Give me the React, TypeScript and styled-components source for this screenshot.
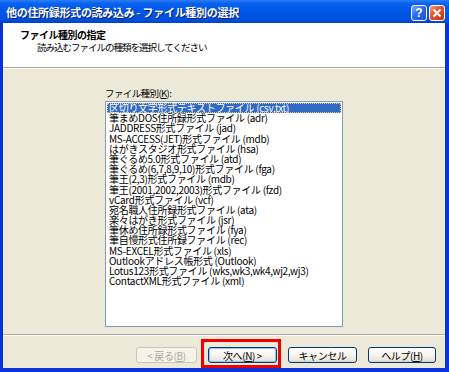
import styled, { createGlobalStyle } from "styled-components";

const GlobalStyle = createGlobalStyle`
  html, body {
    margin: 0;
    padding: 0;
  }
  body {
    width: 449px;
    height: 372px;
    overflow: hidden;
    font-family: "Noto Sans CJK JP", "Noto Sans", sans-serif;
  }
`;

const Window = styled.div`
  width: 449px;
  height: 372px;
  display: flex;
  flex-direction: column;
  background: #0831d9;
`;

const TitleBar = styled.div`
  height: 23px;
  flex: none;
  display: flex;
  align-items: center;
  padding: 0 4px 0 6px;
  background: linear-gradient(#2f7cf7 0%, #0862f0 15%, #0057e8 45%, #0052e0 80%, #0043cc 100%);
`;

const Title = styled.div`
  color: #fff;
  font-size: 11px;
  font-weight: bold;
  letter-spacing: -0.3px;
  text-shadow: 1px 1px #0a1f70;
  white-space: pre;
`;

const Caption = styled.div`
  margin-left: auto;
  margin-top: 2px;
  display: flex;
  gap: 2px;
`;

const CaptionButton = styled.div<{ $close?: boolean }>`
  width: 16px;
  height: 16px;
  box-sizing: border-box;
  border: 1px solid #fff;
  border-radius: 3px;
  display: flex;
  align-items: center;
  justify-content: center;
  color: #fff;
  font: bold 12px "Liberation Sans", sans-serif;
  background: ${(p) =>
    p.$close
      ? "linear-gradient(135deg, #f0a088 0%, #e2572f 40%, #c9330c 100%)"
      : "linear-gradient(135deg, #7fb0fb 0%, #2a6bea 45%, #1a4fd6 100%)"};
`;

const Frame = styled.div`
  flex: 1;
  display: flex;
  flex-direction: column;
  margin: 0 4px 4px 3px;
  background: #ece9d8;
`;

const Header = styled.div`
  height: 44px;
  flex: none;
  box-sizing: border-box;
  background: #fff;
  padding: 5px 0 0 17px;
`;

const HeaderTitle = styled.div`
  font-size: 10px;
  font-weight: bold;
  line-height: 13px;
  letter-spacing: -0.5px;
  color: #000;
`;

const HeaderText = styled.div`
  font-size: 9.5px;
  line-height: 13px;
  letter-spacing: -1px;
  padding-left: 17px;
  color: #000;
`;

const Separator = styled.div`
  flex: none;
  border-top: 1px solid #aca899;
  border-bottom: 1px solid #fff;
`;

const Content = styled.div`
  flex: 1;
  padding: 18px 0 0 102px;
`;

const Label = styled.div`
  font-size: 9.5px;
  line-height: 12px;
  letter-spacing: -0.6px;
  margin-bottom: 2px;
  color: #000;

  u {
    text-decoration: underline;
  }
`;

const ListBox = styled.div`
  width: 238px;
  height: 226px;
  box-sizing: border-box;
  border: 1px solid #7f9db9;
  background: #fff;
  padding: 1px;
  overflow: hidden;
`;

const Row = styled.div<{ $selected?: boolean }>`
  height: 10.2px;
  line-height: 10.2px;
  font-size: 10px;
  letter-spacing: -0.3px;
  white-space: nowrap;
  padding-left: 2px;
  color: ${(p) => (p.$selected ? "#fff" : "#000")};
  background: ${(p) => (p.$selected ? "#316ac5" : "transparent")};
  outline: ${(p) => (p.$selected ? "1px dotted #d8c98a" : "none")};
  outline-offset: -1px;
`;

const ButtonBar = styled.div`
  height: 32px;
  flex: none;
  display: flex;
  justify-content: flex-end;
  align-items: flex-start;
  gap: 11px;
  padding: 11px 9px 0 0;
  box-sizing: border-box;
`;

const Button = styled.div<{ $disabled?: boolean; $default?: boolean; $width?: number }>`
  width: ${(p) => p.$width ?? 69}px;
  height: 16px;
  box-sizing: border-box;
  border: 1px solid ${(p) => (p.$disabled ? "#c9c7ba" : "#003c74")};
  border-radius: 3px;
  display: flex;
  align-items: center;
  justify-content: center;
  font-size: 10px;
  letter-spacing: -0.4px;
  color: ${(p) => (p.$disabled ? "#aca899" : "#000")};
  background: ${(p) =>
    p.$disabled
      ? "#f5f4ea"
      : "linear-gradient(#ffffff 0%, #f6f5ef 50%, #ebe8dd 85%, #d6d0c5 100%)"};
  box-shadow: ${(p) => (p.$default ? "inset 0 0 0 1px #9ebcef" : "none")};

  u {
    text-decoration: underline;
  }
`;

const Highlight = styled.div`
  position: relative;

  &::after {
    content: "";
    position: absolute;
    top: -8px;
    left: -7px;
    right: -4px;
    bottom: -5px;
    border: 3px solid #f00000;
    pointer-events: none;
  }
`;

const fileTypes = [
  "区切り文字形式テキストファイル (csv,txt)",
  "筆まめDOS住所録形式ファイル (adr)",
  "JADDRESS形式ファイル (jad)",
  "MS-ACCESS(JET)形式ファイル (mdb)",
  "はがきスタジオ形式ファイル (hsa)",
  "筆ぐるめ5.0形式ファイル (atd)",
  "筆ぐるめ(6,7,8,9,10)形式ファイル (fga)",
  "筆王(2,3)形式ファイル (mdb)",
  "筆王(2001,2002,2003)形式ファイル (fzd)",
  "vCard形式ファイル (vcf)",
  "宛名職人住所録形式ファイル (ata)",
  "楽々はがき形式ファイル (jsr)",
  "筆休め住所録形式ファイル (fya)",
  "筆自慢形式住所録ファイル (rec)",
  "MS-EXCEL形式ファイル (xls)",
  "Outlookアドレス帳形式 (Outlook)",
  "Lotus123形式ファイル (wks,wk3,wk4,wj2,wj3)",
  "ContactXML形式ファイル (xml)",
];

const App = () => {
  return (
    <>
      <GlobalStyle />
      <Window>
        <TitleBar>
          <Title>他の住所録形式の読み込み - ファイル種別の選択</Title>
          <Caption>
            <CaptionButton>?</CaptionButton>
            <CaptionButton $close>
              <svg width="10" height="10" viewBox="0 0 10 10">
                <path d="M1.5 1.5 L8.5 8.5 M8.5 1.5 L1.5 8.5" stroke="#fff" strokeWidth="2" />
              </svg>
            </CaptionButton>
          </Caption>
        </TitleBar>
        <Frame>
          <Header>
            <HeaderTitle>ファイル種別の指定</HeaderTitle>
            <HeaderText>読み込むファイルの種類を選択してください</HeaderText>
          </Header>
          <Separator />
          <Content>
            <Label>
              ファイル種別(<u>K</u>):
            </Label>
            <ListBox>
              {fileTypes.map((t, i) => (
                <Row key={t} $selected={i === 0}>
                  {t}
                </Row>
              ))}
            </ListBox>
          </Content>
          <Separator />
          <ButtonBar>
            <Button $disabled $width={61}>
              &lt; 戻る(<u>B</u>)
            </Button>
            <Highlight>
              <Button $default>
                次へ(<u>N</u>) &gt;
              </Button>
            </Highlight>
            <Button>キャンセル</Button>
            <Button $width={68}>
              ヘルプ(<u>H</u>)
            </Button>
          </ButtonBar>
        </Frame>
      </Window>
    </>
  );
};

export default App;
